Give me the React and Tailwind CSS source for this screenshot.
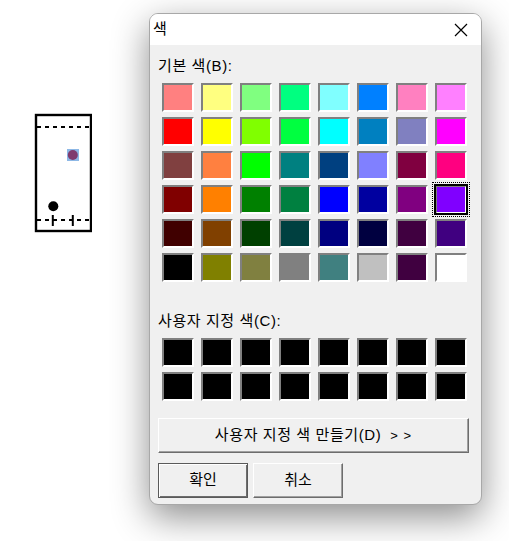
import React from 'react';

const basicColors = [
  ['#ff8080', '#ffff80', '#80ff80', '#00ff80', '#80ffff', '#0080ff', '#ff80c0', '#ff80ff'],
  ['#ff0000', '#ffff00', '#80ff00', '#00ff40', '#00ffff', '#0080c0', '#8080c0', '#ff00ff'],
  ['#804040', '#ff8040', '#00ff00', '#008080', '#004080', '#8080ff', '#800040', '#ff0080'],
  ['#800000', '#ff8000', '#008000', '#008040', '#0000ff', '#0000a0', '#800080', '#8000ff'],
  ['#400000', '#804000', '#004000', '#004040', '#000080', '#000040', '#400040', '#400080'],
  ['#000000', '#808000', '#808040', '#808080', '#408080', '#c0c0c0', '#400040', '#ffffff'],
].flat();

const customColors = Array(16).fill('#000000');

const Swatch = ({ color, selected }) => (
  <div className="relative h-[29px] w-[32px] border-2 border-t-[#808080] border-l-[#808080] border-r-white border-b-white">
    <div className="h-full w-full" style={{ backgroundColor: color }} />
    {selected && (
      <div className="absolute -inset-[5px] border border-dotted border-black p-[1px]">
        <div className="h-full w-full border-2 border-black" />
      </div>
    )}
  </div>
);

const Plate = () => (
  <svg width="58" height="120" viewBox="0 0 58 120" className="mt-[113px] ml-[34px] shrink-0">
    <rect x="2" y="2" width="55" height="116" fill="#fff" stroke="#000" strokeWidth="2.4" />
    <line x1="3" y1="14" x2="56" y2="14" stroke="#000" strokeWidth="2" strokeDasharray="4 4" />
    <line x1="3" y1="107" x2="56" y2="107" stroke="#000" strokeWidth="2" strokeDasharray="4 4" />
    <rect x="33" y="36" width="12" height="12" fill="#8db8e6" />
    <circle cx="38.8" cy="42" r="5" fill="#7f3a6e" />
    <circle cx="19.3" cy="93.3" r="5" fill="#000" />
    <line x1="18.8" y1="102" x2="18.8" y2="113" stroke="#000" strokeWidth="2" />
    <line x1="38.8" y1="102" x2="38.8" y2="113" stroke="#000" strokeWidth="2" />
  </svg>
);

const DialogButton = ({ children, className = '' }) => (
  <button className={`flex items-center justify-center border bg-[#f0f0f0] text-[15px] text-black ${className}`}>
    {children}
  </button>
);

const plainEdge = 'border-t-white border-l-white border-r-[#6d6d6d] border-b-[#6d6d6d] shadow-[inset_-1px_-1px_0_#a0a0a0]';

export default function App() {
  return (
    <div className="flex h-[541px] w-[509px] overflow-hidden bg-white font-['Liberation_Sans','Noto_Sans_CJK_KR',sans-serif] text-[15px] text-black">
      <Plate />
      <div className="mt-[13px] ml-[57px] h-[492px] w-[333px] shrink-0 overflow-hidden rounded-[9px] border border-[#a8a8a8] bg-[#f0f0f0] shadow-[0_12px_36px_rgba(0,0,0,0.45)]">
        <div className="flex h-[31px] items-center justify-between bg-white pl-[3px] pr-[13px]">
          <span>색</span>
          <svg width="14" height="14" viewBox="0 0 14 14" fill="none" stroke="#000" strokeWidth="1.2">
            <path d="M1 1l12 12M13 1L1 13" />
          </svg>
        </div>
        <div className="px-[8px]">
          <p className="mt-[11px] h-[20px] leading-[20px] tracking-[0.6px]">기본 색(B):</p>
          <div className="mt-[7px] grid grid-cols-[repeat(8,32px)] gap-x-[7px] gap-y-[5px] pl-[4px]">
            {basicColors.map((color, i) => (
              <Swatch key={i} color={color} selected={i === 31} />
            ))}
          </div>
          <p className="mt-[29px] h-[20px] leading-[20px] tracking-[0.6px]">사용자 지정 색(C):</p>
          <div className="mt-[7px] grid grid-cols-[repeat(8,32px)] gap-x-[7px] gap-y-[5px] pl-[4px]">
            {customColors.map((color, i) => (
              <Swatch key={i} color={color} />
            ))}
          </div>
          <DialogButton className={`mt-[17px] h-[35px] w-[311px] tracking-[0.6px] ${plainEdge}`}>
            사용자 지정 색 만들기(D)<span className="ml-[9px] text-[13px] tracking-[1px]">&gt; &gt;</span>
          </DialogButton>
          <div className="mt-[10px] flex gap-[5px]">
            <DialogButton className="h-[35px] w-[90px] border-[#5a5a5a] shadow-[inset_1px_1px_0_#fff,inset_-1px_-1px_0_#6d6d6d]">확인</DialogButton>
            <DialogButton className={`h-[35px] w-[90px] ${plainEdge}`}>취소</DialogButton>
          </div>
        </div>
      </div>
    </div>
  );
}
